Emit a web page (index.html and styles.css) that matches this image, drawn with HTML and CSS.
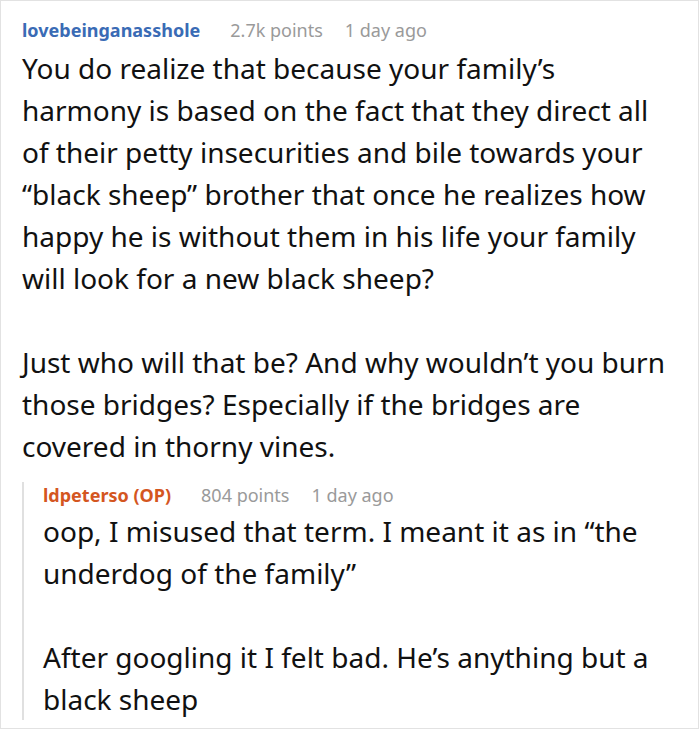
FILE: index.html
```html
<!DOCTYPE html>
<html>
<head>
<meta charset="utf-8">
<link rel="stylesheet" href="styles.css">
</head>
<body>
<div class="frame">
  <div class="comment">
    <div class="head">
      <span class="user">lovebeinganasshole</span>
      <span class="meta points">2.7k points</span>
      <span class="meta">1 day ago</span>
    </div>
    <div class="body">
      <p>You do realize that because your family’s harmony is based on the fact that they direct all of their petty insecurities and bile towards your “black sheep” brother that once he realizes how happy he is without them in his life your family will look for a new black sheep?</p>
      <p>Just who will that be? And why wouldn’t you burn those bridges? Especially if the bridges are covered in thorny vines.</p>
    </div>
    <div class="reply">
      <div class="head">
        <span class="user op">ldpeterso (OP)</span>
        <span class="meta points">804 points</span>
        <span class="meta">1 day ago</span>
      </div>
      <div class="body">
        <p>oop, I misused that term. I meant it as in “the underdog of the family”</p>
        <p>After googling it I felt bad. He’s anything but a black sheep</p>
      </div>
    </div>
  </div>
</div>
</body>
</html>
```
FILE: styles.css
```css
html, body {
  margin: 0;
  padding: 0;
  background: #fff;
}
.frame {
  box-sizing: border-box;
  width: 699px;
  height: 729px;
  border: 1px solid #e2e2e2;
  padding: 16px 20px 0 21px;
  overflow: hidden;
  font-family: "Noto Sans", "Open Sans", sans-serif;
  color: #111;
}
.head {
  font-size: 18px;
  line-height: 26px;
  display: flex;
  gap: 22px;
}
.user {
  font-weight: 700;
  color: #3a6bb5;
  margin-right: 8px;
}
.user.op {
  color: #d4561f;
}
.meta {
  color: #9a9a9a;
}
.body {
  font-size: 28px;
  line-height: 42px;
  margin-top: 4px;
}
.body p {
  margin: 0 0 42px 0;
}
.body p:last-child {
  margin-bottom: 0;
}
.reply {
  margin-top: 15px;
  border-left: 2px solid #e0e0e0;
  padding-left: 19px;
}
.reply .body {
  margin-top: 2px;
}
```
